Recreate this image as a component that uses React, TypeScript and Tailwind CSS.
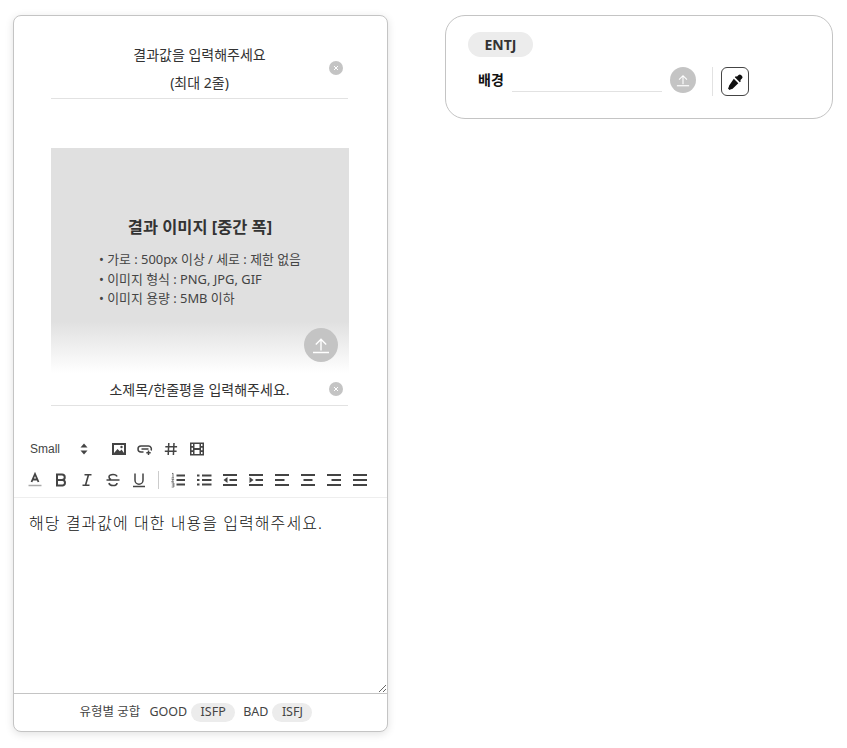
import React from "react";

function Clear({ className = "" }: { className?: string }) {
  return (
    <span className={"flex h-[14px] w-[14px] items-center justify-center rounded-full bg-[#c4c4c4] " + className}>
      <svg width="6" height="6" viewBox="0 0 6 6"><path d="M1 1l4 4M5 1L1 5" stroke="#fff" strokeWidth="1" /></svg>
    </span>
  );
}
function Upload({ big }: { big?: boolean }) {
  const s = big ? 34 : 26;
  return (
    <span className={(big ? "h-[34px] w-[34px]" : "h-[26px] w-[26px]") + " flex items-center justify-center rounded-full bg-[#c4c4c4]"}>
      <svg width={s} height={s} viewBox="0 0 34 34" fill="none" stroke="#fff" strokeWidth="1.4">
        <path d="M17 22.500V11.500M11.800 16.500L17 11.300l5.200 5.200" />
        <path d="M9 24.500h16" strokeWidth="1.500" />
      </svg>
    </span>
  );
}
const I = ({ children }: { children: React.ReactNode }) => (
  <svg width="16" height="16" viewBox="0 0 16 16" fill="none" stroke="#444" strokeWidth="1.800" className="shrink-0">{children}</svg>
);
const Lines = ({ d }: { d: string }) => <I><path d={d} /></I>;

export default function App() {
  return (
    <div className="flex min-h-[748px] bg-white pl-[13px] pt-[15px] font-['Noto_Sans','Noto_Sans_CJK_KR',sans-serif] text-[#333]">
      <div className="flex h-[717px] w-[375px] shrink-0 flex-col overflow-hidden rounded-[8px] border border-[#c4c4c4] bg-white shadow-[0_2px_8px_rgba(0,0,0,0.12)]">
        <div className="ml-[37px] mr-[39px] mt-[25px] flex h-[58px] flex-col items-center border-b border-[#e2e2e2] text-[14px] leading-[27.500px]">
          <div className="relative w-full text-center">
            <div>결과값을 입력해주세요</div>
            <div>(최대 2줄)</div>
            <Clear className="absolute right-[5px] top-[20px]" />
          </div>
        </div>
        <div className="mx-[37px] mt-[49px] flex h-[225px] w-[298px] flex-col items-center bg-[linear-gradient(to_bottom,#e0e0e0_0%,#e0e0e0_77%,#ffffff_100%)]">
          <div className="relative flex h-full w-full flex-col">
            <div className="mt-[67px] text-center text-[16.400px] font-bold leading-[24px]">결과 이미지 [중간 폭]</div>
            <ul className="ml-[48px] mt-[11px] text-[12.900px] leading-[19.500px] text-[#444]">
              <li>• 가로 : 500px 이상 / 세로 : 제한 없음</li>
              <li>• 이미지 형식 : PNG, JPG, GIF</li>
              <li>• 이미지 용량 : 5MB 이하</li>
            </ul>
            <span className="absolute bottom-[11px] right-[11px]"><Upload big /></span>
          </div>
        </div>
        <div className="relative ml-[37px] mr-[39px] flex h-[33px] items-center justify-center border-b border-[#e2e2e2] text-[14px]">
          소제목/한줄평을 입력해주세요.
          <Clear className="absolute right-[5px] top-[9px]" />
        </div>
        <div className="mt-[34px] flex h-[18px] items-center pl-[16px] font-['Liberation_Sans',sans-serif] text-[12px] text-[#444]">
          <span className="w-[46px]">Small</span>
          <svg width="8" height="12" viewBox="0 0 8 12" className="ml-[4px]" fill="#444"><path d="M4 .5L7.500 4.500H.5zM4 11.500L.5 7.500h7z" /></svg>
          <span className="ml-[23px] flex items-center gap-[10px]">
            <svg width="16" height="16" viewBox="0 0 16 16"><rect x="2" y="3" width="12" height="10" fill="none" stroke="#444" strokeWidth="2" /><path d="M3 12l3.500-4 2.300 2.300L10.500 8.500l2.500 3.500z" fill="#444" /><circle cx="10.500" cy="6" r="1.200" fill="#444" /></svg>
            <svg width="16" height="16" viewBox="0 0 16 16" fill="none" stroke="#444" strokeWidth="1.500"><path d="M6.500 11H4a3 3 0 010-6h7.500a3 3 0 012.500 4.500" /><path d="M4.500 8h7M11.500 9.500v4.500M9.300 11.800h4.400" /></svg>
            <I><path d="M5.800 2l-.6 12M11 2l-.6 12M2.300 5.700h11.800M1.800 10.300h11.800" strokeWidth="1.500" /></I>
            <svg width="16" height="16" viewBox="0 0 16 16"><path fillRule="evenodd" fill="#444" d="M1 1.500h14v13H1zM2.500 3v2h1.500V3zM2.500 6.700v2.600h1.500V6.700zM2.500 11v2h1.500v-2zM12 3v2h1.500V3zM12 6.700v2.600h1.500V6.700zM12 11v2h1.500v-2zM5.500 3v4h5V3zM5.500 9v4h5V9z" /></svg>
          </span>
        </div>
        <div className="mt-[13px] flex h-[18px] items-center gap-[10px] pl-[13px]">
          <svg width="16" height="16" viewBox="0 0 16 16" fill="none"><path d="M4.500 10L8 2l3.500 8M5.700 7.500h4.600" stroke="#444" strokeWidth="1.800" /><path d="M1.500 13.500h13" stroke="#aaa" strokeWidth="1.500" /></svg>
          <I><path d="M4 2.500h5a2.600 2.600 0 010 5.500H4zM4 8h5.700a2.800 2.800 0 010 5.500H4z" strokeWidth="2" /></I>
          <I><path d="M5.500 2.700h7M3.500 13.300h7M9.500 2.700l-3 10.600" strokeWidth="1.600" /></I>
          <I><path d="M1.500 8h13M12 4.500C11.500 3 10 2.500 8 2.500c-2.300 0-4 1-4 2.600 0 1 .5 1.900 2 2.400M4 11c.3 1.700 2 2.500 4 2.500 2.300 0 4-1 4-2.600" strokeWidth="1.600" /></I>
          <I><path d="M4 1.500v6.700a4 4 0 008 0V1.500M2 14.500h12" strokeWidth="1.500" /></I>
          <span className="mx-[1px] h-[18px] w-px bg-[#ccc]" />
          <I><path d="M6.500 3.500H15M6.500 8H15M6.500 12.500H15" strokeWidth="1.800" /><path d="M2 1.700l1-.5V6M1.500 6h2.500M1.700 7.500h2l-2 2.300h2.300M1.700 11h2.200v4H1.700M1.900 13h2" strokeWidth=".7" /></I>
          <Lines d="M1 3.500h2.500M6 3.500h9.500M1 8h2.500M6 8h9.500M1 12.500h2.500M6 12.500h9.500" />
          <I><path d="M1 3h14M7.500 8h7.500M1 13h14" /><path d="M5.500 5v6L1.500 8z" fill="#444" stroke="none" /></I>
          <I><path d="M1 3h14M7.500 8h7.500M1 13h14" /><path d="M1.500 5v6l4-3z" fill="#444" stroke="none" /></I>
          <Lines d="M1 3h14M1 8h9.500M1 13h14" />
          <Lines d="M1 3h14M3.500 8h9M1 13h14" />
          <Lines d="M1 3h14M5.500 8H15M1 13h14" />
          <Lines d="M1 3h14M1 8h14M1 13h14" />
        </div>
        <textarea
          readOnly
          defaultValue="해당 결과값에 대한 내용을 입력해주세요."
          className="mt-[8px] min-h-0 w-full flex-1 border-y border-t-[#eeeeee] border-b-[#c4c4c4] px-[15px] py-[13px] text-[16px] font-light leading-[24px] tracking-[1.050px] text-[#111] outline-none"
        />
        <div className="flex h-[37px] shrink-0 items-center justify-center pr-[9px] text-[12.500px] text-[#444]">
          <span>유형별 궁합</span>
          <span className="ml-[9px]">GOOD</span>
          <span className="ml-[4px] flex h-[19px] w-[44px] items-center justify-center rounded-full bg-[#ececec]">ISFP</span>
          <span className="ml-[8px]">BAD</span>
          <span className="ml-[4px] flex h-[19px] w-[40px] items-center justify-center rounded-full bg-[#ececec]">ISFJ</span>
        </div>
      </div>
      <div className="ml-[57px] h-[104px] w-[388px] rounded-[20px] border border-[#c4c4c4] px-[22px] pt-[16px]">
        <span className="flex h-[25px] w-[65px] items-center justify-center rounded-full bg-[#ececec] text-[14px] font-bold text-[#333]">ENTJ</span>
        <div className="mt-[10px] flex h-[29px] items-center">
          <span className="mb-[4px] ml-[10px] w-[34px] text-[14px] font-bold text-[#111]">배경</span>
          <span className="mb-[4px] h-[25px] w-[150px] border-b border-[#e2e2e2]" />
          <span className="mb-[4px] ml-[8px]"><Upload /></span>
          <span className="ml-[16px] h-[29px] w-px bg-[#e2e2e2]" />
          <span className="ml-[8px] flex h-[29px] w-[28px] items-center justify-center rounded-[6px] border border-[#444]">
            <svg width="18" height="18" viewBox="0 0 18 18" fill="#111"><path d="M12.600 2a1.700 1.700 0 012.400 0l1 1a1.700 1.700 0 010 2.400L14.200 7.200l.8.8-1.200 1.200-5-5L10 3l.8.800zM7.800 5.700l4.500 4.500-5.700 5.600c-.4.300-.8.400-1.200.3L3.500 17 2 15.500l.9-1.800c-.1-.4 0-.8.300-1.200z" /></svg>
          </span>
        </div>
      </div>
    </div>
  );
}
